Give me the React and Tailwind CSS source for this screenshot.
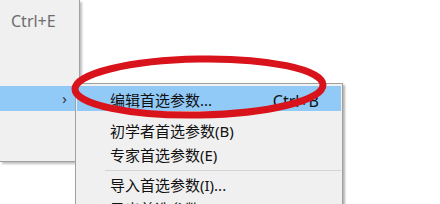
export default function App() {
  const font = { fontFamily: '"Noto Sans", "Noto Sans CJK SC", sans-serif' };
  return (
    <div
      className="relative w-[440px] h-[204px] overflow-hidden bg-white text-[15px] text-[#111]"
      style={font}
    >
      {/* parent menu */}
      <div className="w-[80px] h-[162px] bg-[#f0f0f0] border-r border-b border-[#a0a0a0] shadow-[2px_2px_2px_rgba(0,0,0,0.25)] flex flex-col">
        <div className="h-[9px]" />
        <div className="h-[24px] flex items-center pl-[11px] text-[#6d6d6d] text-[16px]">Ctrl+E</div>
        <div className="h-[53px]" />
        <div className="h-[25px] bg-[#91c9f7] flex items-center justify-end pr-[12px] text-[15px] text-[#333]">
          ›
        </div>
      </div>

      {/* submenu */}
      <div className="absolute left-[75px] top-[83px] w-[268px] h-[140px] bg-[#f0f0f0] border border-[#a0a0a0] shadow-[2px_2px_2px_rgba(0,0,0,0.3)] px-[1px] pt-[2px] flex flex-col">
        <div className="h-[25px] bg-[#91c9f7] flex items-center justify-between pl-[33px] pr-[22px] pt-[4px]">
          <span>编辑首选参数...</span>
          <span className="text-[16px]">Ctrl+B</span>
        </div>
        <div className="h-[8px]" />
        <div className="h-[24px] flex items-center pl-[33px]">初学者首选参数(B)</div>
        <div className="h-[24px] flex items-center pl-[33px]">专家首选参数(E)</div>
        <div className="h-[6px] flex items-center pl-[28px]">
          <div className="h-px w-full bg-[#d4d4d4]" />
        </div>
        <div className="h-[24px] flex items-center pl-[33px]">导入首选参数(I)...</div>
        <div className="h-[24px] flex items-center pl-[33px]">导出首选参数(X)...</div>
      </div>

      {/* red annotation */}
      <svg className="absolute left-0 top-0 pointer-events-none" width="440" height="204">
        <ellipse
          cx="199"
          cy="87"
          rx="124"
          ry="28"
          fill="none"
          stroke="#d9131b"
          strokeWidth="7"
          transform="rotate(-1 199 87)"
        />
      </svg>
    </div>
  );
}
